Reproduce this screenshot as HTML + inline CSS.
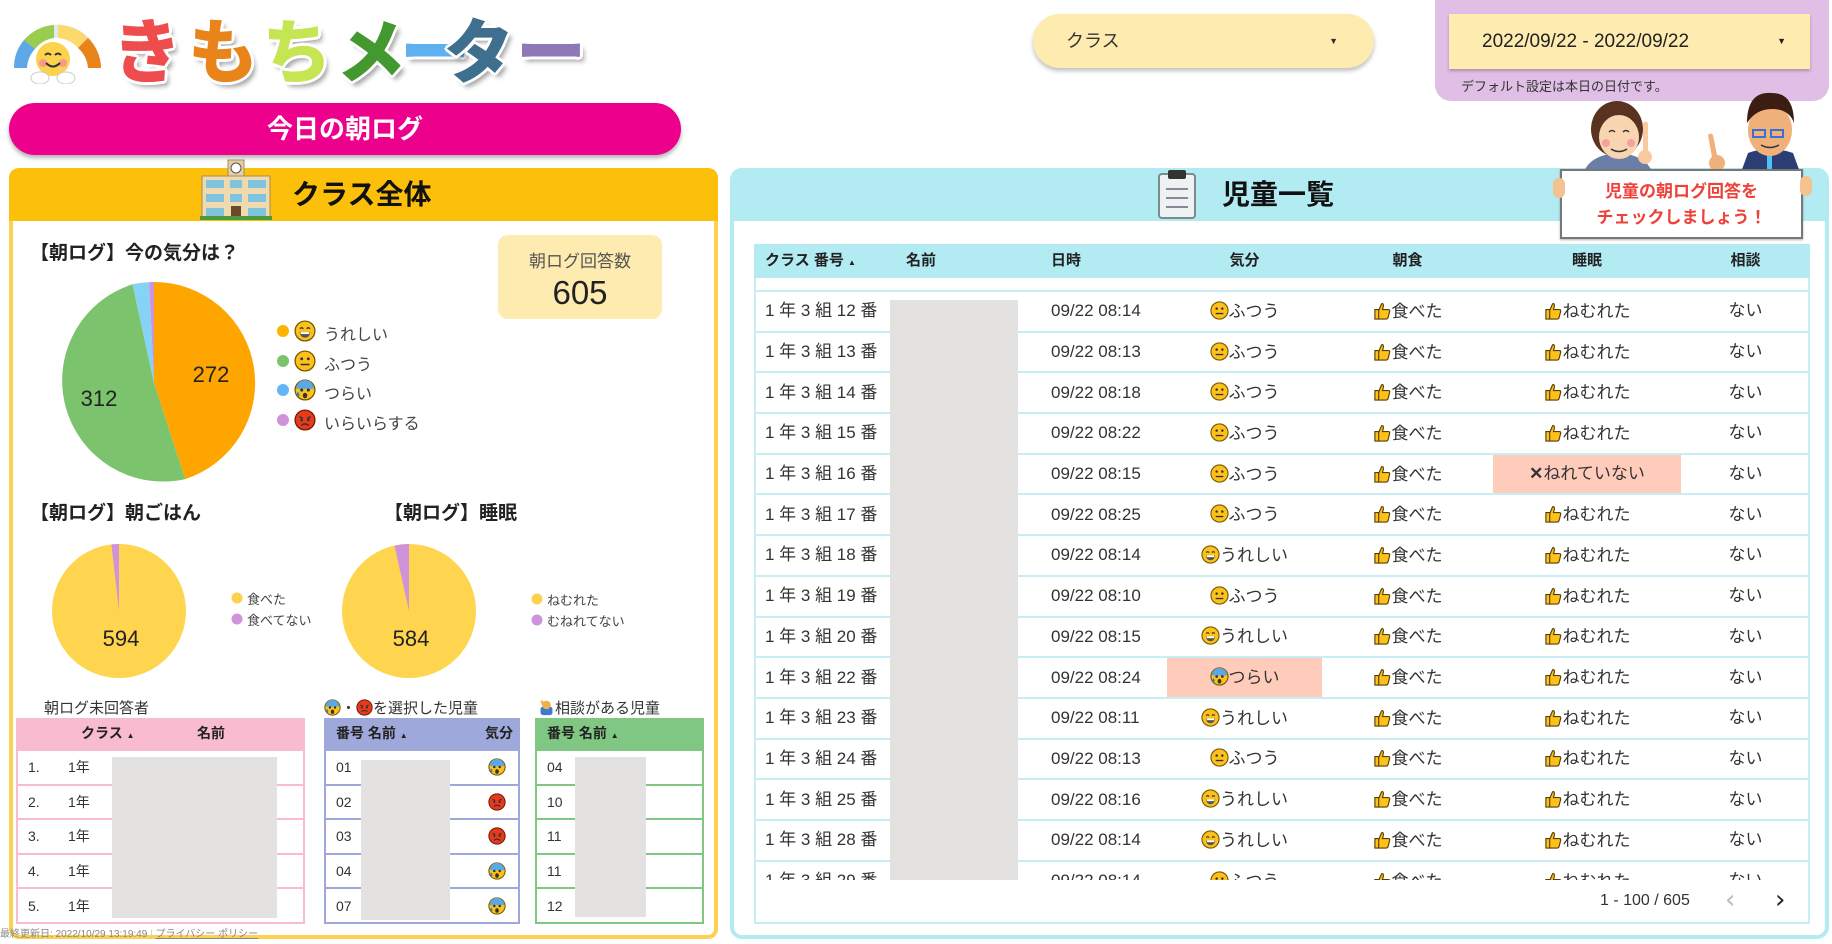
<!DOCTYPE html>
<html><head><meta charset="utf-8">
<style>
*{box-sizing:border-box;margin:0;padding:0}
body{width:1832px;height:944px;background:#fff;font-family:"Liberation Sans","Noto Sans CJK JP",sans-serif;color:#333;position:relative;overflow:hidden}
.abs{position:absolute}
.logo span{position:absolute;top:8px;font-size:70px;font-weight:900;font-family:"Noto Sans CJK JP",sans-serif;line-height:80px;text-shadow:3px 0 0 #fff,-3px 0 0 #fff,0 3px 0 #fff,0 -3px 0 #fff,2px 2px 0 #fff,-2px -2px 0 #fff,2px -2px 0 #fff,-2px 2px 0 #fff,4px 5px 5px rgba(0,0,0,.35)}
table{border-collapse:collapse;table-layout:fixed}
td{vertical-align:middle}
.main td{height:40.7px;border-top:2px solid #c8eef5;font-size:17px;color:#333;white-space:nowrap;overflow:hidden;line-height:20px}
.main td.c{text-align:center}
.main svg,.st svg{vertical-align:-3px}
.st td{height:34.5px;font-size:14px;border-top:2px solid}
</style></head><body>
<svg width="0" height="0" style="position:absolute">
<defs>
<symbol id="neu" viewBox="0 0 20 20"><circle cx="10" cy="10" r="9" fill="#fcc21b" stroke="#7a5a00" stroke-width="1.2"/><circle cx="7" cy="8" r="1.3" fill="#333"/><circle cx="13" cy="8" r="1.3" fill="#333"/><rect x="6" y="12.5" width="8" height="1.4" fill="#333"/></symbol>
<symbol id="hap" viewBox="0 0 20 20"><circle cx="10" cy="10" r="9" fill="#fcc21b" stroke="#7a5a00" stroke-width="1.2"/><path d="M5.5 8q1.5-2 3 0M11.5 8q1.5-2 3 0" stroke="#333" fill="none" stroke-width="1.2"/><path d="M5 11h10q-1 5-5 5t-5-5z" fill="#555"/><rect x="6" y="11" width="8" height="1.8" fill="#fff"/></symbol>
<symbol id="sad" viewBox="0 0 20 20"><circle cx="10" cy="10" r="9" fill="#fcc21b" stroke="#7a5a00" stroke-width="1.2"/><path d="M2 9a8 8 0 0 1 16 0z" fill="#5aa9e6"/><circle cx="7" cy="10" r="1.4" fill="#333"/><circle cx="13" cy="10" r="1.4" fill="#333"/><ellipse cx="10" cy="15" rx="2" ry="2.5" fill="#333"/><path d="M3 12q-1 3 1 4q2-1 0-4z" fill="#2a7fd4"/></symbol>
<symbol id="ang" viewBox="0 0 20 20"><circle cx="10" cy="10" r="9" fill="#e53a1e" stroke="#7a1a00" stroke-width="1.2"/><path d="M5 7l3 1.5M15 7l-3 1.5" stroke="#333" stroke-width="1.3"/><circle cx="7" cy="10" r="1.2" fill="#333"/><circle cx="13" cy="10" r="1.2" fill="#333"/><path d="M6.5 15q3.5-3 7 0" stroke="#333" fill="none" stroke-width="1.3"/></symbol>
<symbol id="thumb" viewBox="0 0 20 20"><path d="M2 9h4v10H2zM6 10l3-7q2-1 2 2l-1 4h6q2 0 1.5 2l-1.5 6q-.5 2-2 2H6z" fill="#fcc21b" stroke="#5a3f00" stroke-width="1.2"/></symbol>
</defs></svg>

<svg class="abs" style="left:10px;top:12px" width="95" height="72" viewBox="0 0 95 72">
<path d="M4 56A43 43 0 0 1 91 56H78A30 30 0 0 0 17 56z" fill="#e3e8f5"/>
<path d="M4 56A43 43 0 0 1 14 28L25 37A30 30 0 0 0 17 56z" fill="#5ea8e8"/>
<path d="M14 28A43 43 0 0 1 44 13V26A30 30 0 0 0 25 37z" fill="#9acd4e"/>
<path d="M48 13A43 43 0 0 1 78 26L68 36A30 30 0 0 0 48 26z" fill="#fcd96a"/>
<path d="M78 26A43 43 0 0 1 91 56H78A30 30 0 0 0 68 36z" fill="#e8841a"/>
<circle cx="43" cy="47" r="17" fill="#fcd34c"/><circle cx="33" cy="51" r="4" fill="#f59a8e"/><circle cx="53" cy="51" r="4" fill="#f59a8e"/>
<path d="M35 43q3-3 6 0M45 43q3-3 6 0M36 51q7 7 14 0" stroke="#333" stroke-width="2" fill="none"/>
<ellipse cx="30" cy="66" rx="9" ry="6" fill="#fff" stroke="#ccc"/><ellipse cx="56" cy="66" rx="9" ry="6" fill="#fff" stroke="#ccc"/>
</svg>
<div class="logo">
<span style="left:112px;color:#ef4d4d">き</span>
<span style="left:188px;color:#e8841a">も</span>
<span style="left:262px;color:#c6e553">ち</span>
<span style="left:336px;color:#43982f">メ</span>
<span style="left:400px;color:#5fb0ee">ー</span>
<span style="left:444px;color:#3f6f8f">タ</span>
<span style="left:516px;color:#8e78b8">ー</span>
</div>

<div class="abs" style="left:9px;top:103px;width:672px;height:52px;border-radius:26px;background:#ec008c;box-shadow:0 3px 4px rgba(0,0,0,.3);color:#fff;font-size:26px;font-weight:bold;text-align:center;line-height:52px">今日の朝ログ</div>

<div class="abs" style="left:1033px;top:14px;width:341px;height:54px;border-radius:27px;background:#feebb0;box-shadow:0 3px 4px rgba(0,0,0,.25);font-size:18px;line-height:54px;padding-left:33px;color:#333">クラス<span style="position:absolute;right:36px;font-size:9px">▼</span></div>

<div class="abs" style="left:1435px;top:0;width:394px;height:101px;background:#e0bfe6;border-radius:0 0 16px 16px"></div>
<div class="abs" style="left:1449px;top:14px;width:361px;height:55px;background:#feebb0;box-shadow:0 2px 3px rgba(0,0,0,.25);font-size:19px;line-height:55px;padding-left:33px;color:#222">2022/09/22 - 2022/09/22<span style="position:absolute;right:24px;font-size:9px">▼</span></div>
<div class="abs" style="left:1461px;top:76px;font-size:13px;color:#333">デフォルト設定は本日の日付です。</div>

<div class="abs" style="left:9px;top:168px;width:709px;height:771px;border:4px solid #fdd04f;border-radius:10px;border-top:none"></div>
<div class="abs" style="left:9px;top:168px;width:709px;height:53px;background:#fdc00a;border-radius:10px 10px 0 0"></div>
<svg class="abs" style="left:200px;top:158px" width="72" height="62" viewBox="0 0 72 62">
<rect x="28" y="2" width="16" height="58" fill="#e6cfa0" stroke="#a88a5a"/><circle cx="36" cy="10" r="5" fill="#fff" stroke="#555"/>
<rect x="2" y="18" width="68" height="42" fill="#efd9ae" stroke="#a88a5a"/>
<g fill="#7fc4dc"><rect x="6" y="22" width="18" height="8"/><rect x="48" y="22" width="18" height="8"/><rect x="6" y="36" width="18" height="8"/><rect x="48" y="36" width="18" height="8"/><rect x="30" y="22" width="12" height="8"/><rect x="30" y="36" width="12" height="8"/><rect x="6" y="50" width="18" height="8"/><rect x="48" y="50" width="18" height="8"/></g>
<rect x="31" y="48" width="10" height="12" fill="#6b4a2b"/><rect x="0" y="58" width="72" height="4" fill="#4a9a3a"/>
</svg>
<div class="abs" style="left:292px;top:172px;font-size:28px;font-weight:bold;color:#111;line-height:46px">クラス全体</div>

<div class="abs" style="left:30px;top:238px;font-size:19px;font-weight:bold;color:#222">【朝ログ】今の気分は？</div>
<div class="abs" style="left:498px;top:235px;width:164px;height:84px;background:#feebb0;border-radius:10px;text-align:center">
<div style="font-size:17px;color:#555;margin-top:12px">朝ログ回答数</div>
<div style="font-size:33px;color:#222;margin-top:2px">605</div></div>

<svg class="abs" style="left:0;top:0" width="720" height="944" viewBox="0 0 720 944">
<path d="M154 383V282A101 101 0 0 1 185.2 479.1z" fill="#fea500"/>
<path d="M154 383L185.2 479.1A101 101 0 0 1 132.5 284.3z" fill="#7cc36d"/>
<path d="M154 383L132.5 284.3A101 101 0 0 1 149.1 282.1z" fill="#85d3f5"/>
<path d="M154 383L149.1 282.1A101 101 0 0 1 154 282z" fill="#ce93d8"/>
<text x="211" y="382" font-size="22" fill="#222" text-anchor="middle" font-family="Liberation Sans">272</text>
<text x="99" y="406" font-size="22" fill="#222" text-anchor="middle" font-family="Liberation Sans">312</text>
<circle cx="119" cy="611" r="67" fill="#ffd54f"/>
<path d="M119 611L111.4 544.4A67 67 0 0 1 119 544z" fill="#ce93d8"/>
<text x="121" y="646" font-size="22" fill="#222" text-anchor="middle" font-family="Liberation Sans">594</text>
<circle cx="409" cy="611" r="67" fill="#ffd54f"/>
<path d="M409 611L394.5 545.6A67 67 0 0 1 409 544z" fill="#ce93d8"/>
<text x="411" y="646" font-size="22" fill="#222" text-anchor="middle" font-family="Liberation Sans">584</text>
<circle cx="283" cy="331" r="6" fill="#fdb400"/><circle cx="283" cy="361" r="6" fill="#7cc36d"/><circle cx="283" cy="390" r="6" fill="#64b5f6"/><circle cx="283" cy="420" r="6" fill="#ce93d8"/>
<circle cx="237" cy="598" r="5.5" fill="#fdd04f"/><circle cx="237" cy="619" r="5.5" fill="#ce93d8"/>
<circle cx="537" cy="599" r="5.5" fill="#fdd04f"/><circle cx="537" cy="620" r="5.5" fill="#ce93d8"/>
</svg>
<svg class="abs" style="left:294px;top:320px" width="22" height="22"><use href="#hap"/></svg>
<svg class="abs" style="left:294px;top:350px" width="22" height="22"><use href="#neu"/></svg>
<svg class="abs" style="left:294px;top:379px" width="22" height="22"><use href="#sad"/></svg>
<svg class="abs" style="left:294px;top:409px" width="22" height="22"><use href="#ang"/></svg>
<div class="abs" style="left:324px;top:321px;font-size:16px;line-height:29.7px;color:#444">うれしい<br>ふつう<br>つらい<br>いらいらする</div>
<div class="abs" style="left:247px;top:589px;font-size:13px;line-height:21px;color:#444">食べた<br>食べてない</div>
<div class="abs" style="left:547px;top:590px;font-size:13px;line-height:21px;color:#444">ねむれた<br>むねれてない</div>
<div class="abs" style="left:30px;top:498px;font-size:19px;font-weight:bold;color:#222">【朝ログ】朝ごはん</div>
<div class="abs" style="left:384px;top:498px;font-size:19px;font-weight:bold;color:#222">【朝ログ】睡眠</div>

<div class="abs" style="left:44px;top:697px;font-size:15px;color:#333">朝ログ未回答者</div>
<div class="abs" style="left:324px;top:697px;font-size:15px;color:#333"><svg width="17" height="17" style="vertical-align:-3px"><use href="#sad"/></svg>・<svg width="17" height="17" style="vertical-align:-3px"><use href="#ang"/></svg>を選択した児童</div>
<div class="abs" style="left:538px;top:697px;font-size:15px;color:#333"><svg width="17" height="17" viewBox="0 0 20 20" style="vertical-align:-3px"><rect x="3" y="9" width="14" height="10" rx="3" fill="#3e7bd0"/><circle cx="10" cy="7" r="5" fill="#f2b04a"/><path d="M4 2l3 6" stroke="#f2b04a" stroke-width="3"/></svg>相談がある児童</div>

<div class="abs st" style="left:16px;top:718px;width:289px;height:206px;border:2px solid #f8bbd0;border-top:none">
<div style="height:31px;background:#f8bbd0;font-size:14px;font-weight:bold;line-height:31px;color:#222"><span style="position:absolute;left:63px">クラス <span style="font-size:8px">▲</span></span><span style="position:absolute;left:179px">名前</span></div>
<table style="width:285px"><tbody>
<tr><td style="border-color:#f8bbd0;padding-left:10px;width:50px">1.</td><td style="border-color:#f8bbd0">1年</td></tr>
<tr><td style="border-color:#f8bbd0;padding-left:10px">2.</td><td style="border-color:#f8bbd0">1年</td></tr>
<tr><td style="border-color:#f8bbd0;padding-left:10px">3.</td><td style="border-color:#f8bbd0">1年</td></tr>
<tr><td style="border-color:#f8bbd0;padding-left:10px">4.</td><td style="border-color:#f8bbd0">1年</td></tr>
<tr><td style="border-color:#f8bbd0;padding-left:10px">5.</td><td style="border-color:#f8bbd0">1年</td></tr>
</tbody></table></div>
<div class="abs" style="left:112px;top:757px;width:165px;height:161px;background:#e3e2e0"></div>

<div class="abs st" style="left:324px;top:718px;width:196px;height:206px;border:2px solid #9fa8da;border-top:none">
<div style="height:31px;background:#9fa8da;font-size:14px;font-weight:bold;line-height:31px;color:#222"><span style="position:absolute;left:10px">番号 名前 <span style="font-size:8px">▲</span></span><span style="position:absolute;right:5px">気分</span></div>
<table style="width:192px"><tbody>
<tr><td style="border-color:#9fa8da;padding-left:10px">01</td><td style="border-color:#9fa8da;text-align:right;padding-right:12px"><svg width="18" height="18"><use href="#sad"/></svg></td></tr>
<tr><td style="border-color:#9fa8da;padding-left:10px">02</td><td style="border-color:#9fa8da;text-align:right;padding-right:12px"><svg width="18" height="18"><use href="#ang"/></svg></td></tr>
<tr><td style="border-color:#9fa8da;padding-left:10px">03</td><td style="border-color:#9fa8da;text-align:right;padding-right:12px"><svg width="18" height="18"><use href="#ang"/></svg></td></tr>
<tr><td style="border-color:#9fa8da;padding-left:10px">04</td><td style="border-color:#9fa8da;text-align:right;padding-right:12px"><svg width="18" height="18"><use href="#sad"/></svg></td></tr>
<tr><td style="border-color:#9fa8da;padding-left:10px">07</td><td style="border-color:#9fa8da;text-align:right;padding-right:12px"><svg width="18" height="18"><use href="#sad"/></svg></td></tr>
</tbody></table></div>
<div class="abs" style="left:361px;top:760px;width:89px;height:160px;background:#e3e2e0"></div>

<div class="abs st" style="left:535px;top:718px;width:169px;height:206px;border:2px solid #81c784;border-top:none">
<div style="height:31px;background:#81c784;font-size:14px;font-weight:bold;line-height:31px;color:#222;padding-left:10px">番号 名前 <span style="font-size:8px">▲</span></div>
<table style="width:165px"><tbody>
<tr><td style="border-color:#81c784;padding-left:10px">04</td></tr>
<tr><td style="border-color:#81c784;padding-left:10px">10</td></tr>
<tr><td style="border-color:#81c784;padding-left:10px">11</td></tr>
<tr><td style="border-color:#81c784;padding-left:10px">11</td></tr>
<tr><td style="border-color:#81c784;padding-left:10px">12</td></tr>
</tbody></table></div>
<div class="abs" style="left:575px;top:757px;width:71px;height:160px;background:#e3e2e0"></div>

<div class="abs" style="left:0;top:925px;font-size:10px;color:#888;white-space:nowrap">最終更新日: 2022/10/29 13:19:49 <span style="color:#ccc">|</span> <u>プライバシー ポリシー</u></div>

<div class="abs" style="left:730px;top:168px;width:1099px;height:771px;border:4px solid #b2ebf2;border-top:none;border-radius:12px"></div>
<div class="abs" style="left:730px;top:168px;width:1099px;height:53px;background:#b2ebf2;border-radius:12px 12px 0 0"></div>
<svg class="abs" style="left:1155px;top:169px" width="44" height="50" viewBox="0 0 44 50">
<rect x="4" y="5" width="36" height="44" rx="3" fill="#eef2f3" stroke="#7a8a8f" stroke-width="2"/>
<rect x="13" y="1" width="18" height="9" rx="2" fill="#333"/>
<path d="M11 20h22M11 29h22M11 38h22" stroke="#889" stroke-width="2"/></svg>
<div class="abs" style="left:1222px;top:172px;font-size:28px;font-weight:bold;color:#111;line-height:46px">児童一覧</div>

<svg class="abs" style="left:1565px;top:85px" width="270" height="90" viewBox="0 0 270 90">
<path d="M18 90q5-20 35-22q30 2 35 22z" fill="#6a7fa8"/>
<ellipse cx="52" cy="44" rx="26" ry="28" fill="#5a3320"/>
<ellipse cx="54" cy="52" rx="20" ry="22" fill="#f9d4b0"/>
<circle cx="41" cy="58" r="4" fill="#f6a0a0"/><circle cx="66" cy="58" r="4" fill="#f6a0a0"/>
<path d="M44 47q3-3 6 0M58 47q3-3 6 0M46 64q8 5 16 0" stroke="#333" stroke-width="1.5" fill="none"/>
<path d="M78 70l0-32q3-3 5 0l0 30z" fill="#f9c9a0"/><circle cx="80" cy="72" r="7" fill="#f9c9a0"/>
<path d="M175 90l8-22q22-8 45 0l8 22z" fill="#2c3e74"/><rect x="202" y="70" width="5" height="20" fill="#4fc3f7"/>
<ellipse cx="205" cy="45" rx="22" ry="26" fill="#f0b07a"/>
<path d="M182 38q0-32 25-30q22 0 22 30q-5-14-22-14q-16 0-25 14z" fill="#3b1d12"/>
<path d="M188 45h12v7h-12zM206 45h12v7h-12z" stroke="#3a6fd8" stroke-width="2" fill="none"/>
<path d="M196 60q9 5 18 0" stroke="#333" stroke-width="1.5" fill="none"/>
<path d="M148 78l-5-28q3-3 5 0l5 25z" fill="#f0b07a"/><circle cx="152" cy="78" r="8" fill="#f0b07a"/>
</svg>
<div class="abs" style="left:1560px;top:169px;width:243px;height:70px;background:#fff;border:2px solid #777;box-shadow:0 1px 2px rgba(0,0,0,.3);text-align:center;color:#f0403a;font-weight:bold;font-size:17px;line-height:26px;padding-top:8px">児童の朝ログ回答を<br>チェックしましょう！</div>
<div class="abs" style="left:1553px;top:178px;width:12px;height:20px;border-radius:6px;background:#f5c18f"></div>
<div class="abs" style="left:1800px;top:176px;width:12px;height:20px;border-radius:6px;background:#f5c18f"></div>

<div class="abs" style="left:754px;top:244px;width:1056px;height:680px;border:2px solid #c8eef5;border-top:none"></div>
<div class="abs" style="left:754px;top:244px;width:1056px;height:34px;background:#b2ebf2;font-size:15px;font-weight:bold;color:#222;line-height:34px">
<span class="abs" style="left:11px">クラス 番号 <span style="font-size:8px">▲</span></span>
<span class="abs" style="left:152px">名前</span>
<span class="abs" style="left:297px">日時</span>
<span class="abs" style="left:413px;width:155px;text-align:center">気分</span>
<span class="abs" style="left:568px;width:171px;text-align:center">朝食</span>
<span class="abs" style="left:739px;width:188px;text-align:center">睡眠</span>
<span class="abs" style="left:927px;width:129px;text-align:center">相談</span>
</div>
<div class="abs main" style="left:754px;top:278px;width:1056px;height:602px;overflow:hidden">
<div style="height:12px"></div>
<table style="width:1056px">
<colgroup><col style="width:141px"><col style="width:145px"><col style="width:127px"><col style="width:155px"><col style="width:171px"><col style="width:188px"><col style="width:129px"></colgroup>
<tbody>
<tr><td style="padding-left:11px">1 年 3 組 12 番</td><td></td><td style="padding-left:11px">09/22 08:14</td><td class="c"><svg width="19" height="19"><use href="#neu"/></svg>ふつう</td><td class="c"><svg width="19" height="19"><use href="#thumb"/></svg>食べた</td><td class="c"><svg width="19" height="19"><use href="#thumb"/></svg>ねむれた</td><td class="c">ない</td></tr>
<tr><td style="padding-left:11px">1 年 3 組 13 番</td><td></td><td style="padding-left:11px">09/22 08:13</td><td class="c"><svg width="19" height="19"><use href="#neu"/></svg>ふつう</td><td class="c"><svg width="19" height="19"><use href="#thumb"/></svg>食べた</td><td class="c"><svg width="19" height="19"><use href="#thumb"/></svg>ねむれた</td><td class="c">ない</td></tr>
<tr><td style="padding-left:11px">1 年 3 組 14 番</td><td></td><td style="padding-left:11px">09/22 08:18</td><td class="c"><svg width="19" height="19"><use href="#neu"/></svg>ふつう</td><td class="c"><svg width="19" height="19"><use href="#thumb"/></svg>食べた</td><td class="c"><svg width="19" height="19"><use href="#thumb"/></svg>ねむれた</td><td class="c">ない</td></tr>
<tr><td style="padding-left:11px">1 年 3 組 15 番</td><td></td><td style="padding-left:11px">09/22 08:22</td><td class="c"><svg width="19" height="19"><use href="#neu"/></svg>ふつう</td><td class="c"><svg width="19" height="19"><use href="#thumb"/></svg>食べた</td><td class="c"><svg width="19" height="19"><use href="#thumb"/></svg>ねむれた</td><td class="c">ない</td></tr>
<tr><td style="padding-left:11px">1 年 3 組 16 番</td><td></td><td style="padding-left:11px">09/22 08:15</td><td class="c"><svg width="19" height="19"><use href="#neu"/></svg>ふつう</td><td class="c"><svg width="19" height="19"><use href="#thumb"/></svg>食べた</td><td class="c" style="background:#ffccbc"><b>✕</b>ねれていない</td><td class="c">ない</td></tr>
<tr><td style="padding-left:11px">1 年 3 組 17 番</td><td></td><td style="padding-left:11px">09/22 08:25</td><td class="c"><svg width="19" height="19"><use href="#neu"/></svg>ふつう</td><td class="c"><svg width="19" height="19"><use href="#thumb"/></svg>食べた</td><td class="c"><svg width="19" height="19"><use href="#thumb"/></svg>ねむれた</td><td class="c">ない</td></tr>
<tr><td style="padding-left:11px">1 年 3 組 18 番</td><td></td><td style="padding-left:11px">09/22 08:14</td><td class="c"><svg width="19" height="19"><use href="#hap"/></svg>うれしい</td><td class="c"><svg width="19" height="19"><use href="#thumb"/></svg>食べた</td><td class="c"><svg width="19" height="19"><use href="#thumb"/></svg>ねむれた</td><td class="c">ない</td></tr>
<tr><td style="padding-left:11px">1 年 3 組 19 番</td><td></td><td style="padding-left:11px">09/22 08:10</td><td class="c"><svg width="19" height="19"><use href="#neu"/></svg>ふつう</td><td class="c"><svg width="19" height="19"><use href="#thumb"/></svg>食べた</td><td class="c"><svg width="19" height="19"><use href="#thumb"/></svg>ねむれた</td><td class="c">ない</td></tr>
<tr><td style="padding-left:11px">1 年 3 組 20 番</td><td></td><td style="padding-left:11px">09/22 08:15</td><td class="c"><svg width="19" height="19"><use href="#hap"/></svg>うれしい</td><td class="c"><svg width="19" height="19"><use href="#thumb"/></svg>食べた</td><td class="c"><svg width="19" height="19"><use href="#thumb"/></svg>ねむれた</td><td class="c">ない</td></tr>
<tr><td style="padding-left:11px">1 年 3 組 22 番</td><td></td><td style="padding-left:11px">09/22 08:24</td><td class="c" style="background:#ffccbc"><svg width="19" height="19"><use href="#sad"/></svg>つらい</td><td class="c"><svg width="19" height="19"><use href="#thumb"/></svg>食べた</td><td class="c"><svg width="19" height="19"><use href="#thumb"/></svg>ねむれた</td><td class="c">ない</td></tr>
<tr><td style="padding-left:11px">1 年 3 組 23 番</td><td></td><td style="padding-left:11px">09/22 08:11</td><td class="c"><svg width="19" height="19"><use href="#hap"/></svg>うれしい</td><td class="c"><svg width="19" height="19"><use href="#thumb"/></svg>食べた</td><td class="c"><svg width="19" height="19"><use href="#thumb"/></svg>ねむれた</td><td class="c">ない</td></tr>
<tr><td style="padding-left:11px">1 年 3 組 24 番</td><td></td><td style="padding-left:11px">09/22 08:13</td><td class="c"><svg width="19" height="19"><use href="#neu"/></svg>ふつう</td><td class="c"><svg width="19" height="19"><use href="#thumb"/></svg>食べた</td><td class="c"><svg width="19" height="19"><use href="#thumb"/></svg>ねむれた</td><td class="c">ない</td></tr>
<tr><td style="padding-left:11px">1 年 3 組 25 番</td><td></td><td style="padding-left:11px">09/22 08:16</td><td class="c"><svg width="19" height="19"><use href="#hap"/></svg>うれしい</td><td class="c"><svg width="19" height="19"><use href="#thumb"/></svg>食べた</td><td class="c"><svg width="19" height="19"><use href="#thumb"/></svg>ねむれた</td><td class="c">ない</td></tr>
<tr><td style="padding-left:11px">1 年 3 組 28 番</td><td></td><td style="padding-left:11px">09/22 08:14</td><td class="c"><svg width="19" height="19"><use href="#hap"/></svg>うれしい</td><td class="c"><svg width="19" height="19"><use href="#thumb"/></svg>食べた</td><td class="c"><svg width="19" height="19"><use href="#thumb"/></svg>ねむれた</td><td class="c">ない</td></tr>
<tr><td style="padding-left:11px">1 年 3 組 29 番</td><td></td><td style="padding-left:11px">09/22 08:14</td><td class="c"><svg width="19" height="19"><use href="#neu"/></svg>ふつう</td><td class="c"><svg width="19" height="19"><use href="#thumb"/></svg>食べた</td><td class="c"><svg width="19" height="19"><use href="#thumb"/></svg>ねむれた</td><td class="c">ない</td></tr>
</tbody></table></div>
<div class="abs" style="left:890px;top:300px;width:128px;height:580px;background:#e3e2e0"></div>
<div class="abs" style="left:1600px;top:892px;font-size:16px;color:#333">1 - 100 / 605</div>
<div class="abs" style="left:1725px;top:885px;font-size:26px;color:#bbb;font-family:'DejaVu Sans',sans-serif">‹</div>
<div class="abs" style="left:1775px;top:885px;font-size:26px;color:#222;font-family:'DejaVu Sans',sans-serif">›</div>
</body></html>
